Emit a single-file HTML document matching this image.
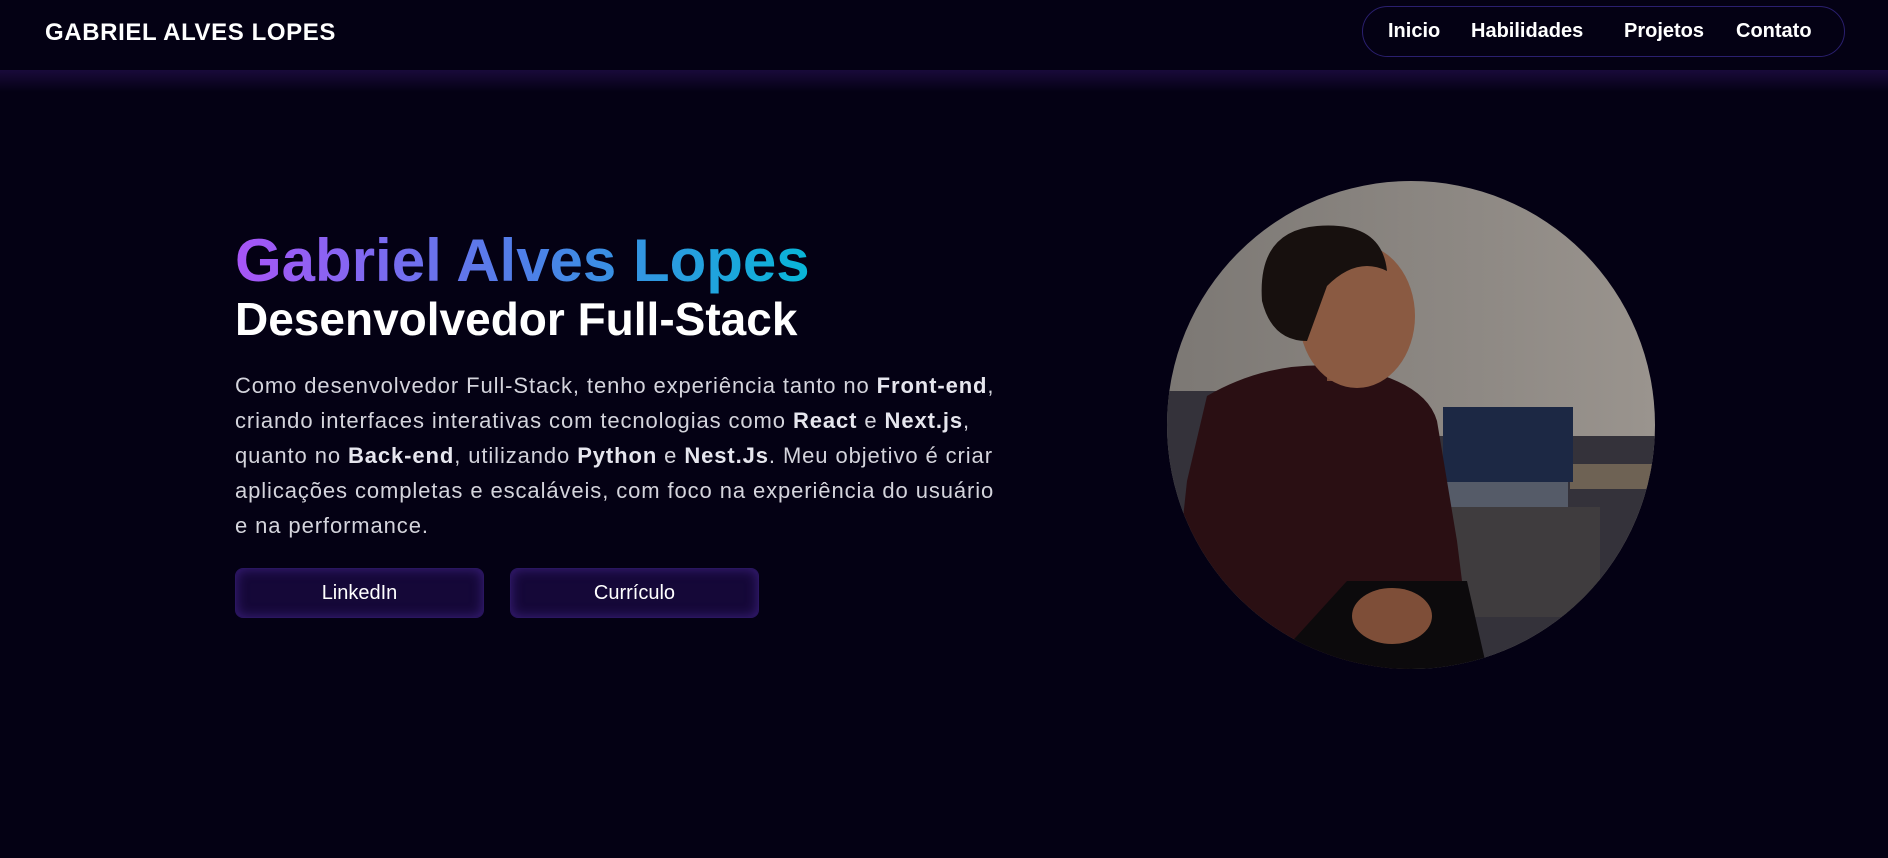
<!DOCTYPE html>
<html><head><meta charset="utf-8"><style>
*{margin:0;padding:0;box-sizing:border-box}
body{width:1888px;height:858px;background:#040114;font-family:"Liberation Sans",sans-serif;overflow:hidden;position:relative;color:#fff}
.hdr{position:absolute;left:0;top:0;width:1888px;height:70px;background:#040114}
.glow{position:absolute;left:0;top:70px;width:1888px;height:22px;background:linear-gradient(#190a3a,#040114)}
.logo{position:absolute;left:45px;top:19px;font-size:24px;font-weight:bold;letter-spacing:0.6px}
.nav{position:absolute;left:1362px;top:6px;width:483px;height:51px;border:1.5px solid #2a1f6e;border-radius:26px}
.nav span{position:absolute;top:13px;font-size:20px;font-weight:bold}
h1{position:absolute;left:235px;top:226px;font-size:60px;font-weight:bold;background:linear-gradient(90deg,#a855f7,#4f7fe8 50%,#08b6d8);-webkit-background-clip:text;background-clip:text;color:transparent;white-space:nowrap}
h2{position:absolute;left:235px;top:292px;font-size:46px;font-weight:bold;white-space:nowrap}
p{position:absolute;left:235px;top:368px;font-size:22px;letter-spacing:0.9px;line-height:35px;color:#d4d4dc;white-space:nowrap}
p b{color:#e6e6ee}
.btn{position:absolute;top:568px;width:249px;height:50px;border-radius:8px;background:#150838;box-shadow:inset 0 0 12px #3a1f7a;border:1px solid #2a1660;font-size:20px;text-align:center;line-height:48px}
.ph{position:absolute;left:1167px;top:181px;width:488px;height:488px;border-radius:50%;overflow:hidden}
</style></head><body>
<div class="hdr"></div><div class="glow"></div>
<div class="logo">GABRIEL ALVES LOPES</div>
<div class="nav"><span style="left:25px">Inicio</span><span style="left:108px">Habilidades</span><span style="left:261px">Projetos</span><span style="left:373px">Contato</span></div>
<h1>Gabriel Alves Lopes</h1>
<h2>Desenvolvedor Full-Stack</h2>
<p>Como desenvolvedor Full-Stack, tenho experiência tanto no <b>Front-end</b>,<br>criando interfaces interativas com tecnologias como <b>React</b> e <b>Next.js</b>,<br>quanto no <b>Back-end</b>, utilizando <b>Python</b> e <b>Nest.Js</b>. Meu objetivo é criar<br>aplicações completas e escaláveis, com foco na experiência do usuário<br>e na performance.</p>
<div class="btn" style="left:235px">LinkedIn</div>
<div class="btn" style="left:510px">Currículo</div>
<div class="ph"><svg width="488" height="488" viewBox="0 0 488 488">
<defs><linearGradient id="w" x1="0" x2="1"><stop offset="0" stop-color="#7c7874"/><stop offset="0.6" stop-color="#8d8883"/><stop offset="1" stop-color="#9a948e"/></linearGradient></defs>
<rect width="488" height="488" fill="url(#w)"/>
<rect x="0" y="210" width="140" height="278" fill="#34323a"/>
<rect x="260" y="255" width="228" height="233" fill="#34323a"/>
<rect x="283" y="326" width="150" height="110" fill="#3f3c3e"/>
<rect x="403" y="283" width="85" height="25" fill="#6e6254"/>
<rect x="276" y="226" width="130" height="75" fill="#1c2844"/>
<rect x="273" y="301" width="128" height="25" fill="#555b68"/>
<path d="M40 215 Q100 180 170 185 L200 190 Q260 205 270 240 L290 360 L300 440 L240 488 L0 488 L20 300 Z" fill="#2a0f13"/>
<rect x="160" y="170" width="45" height="30" fill="#7a4c38"/>
<ellipse cx="190" cy="135" rx="58" ry="72" fill="#8a5a42"/>
<path d="M95 120 Q90 50 150 45 Q215 40 220 90 Q190 75 160 105 L140 160 Q105 160 95 120Z" fill="#17100e"/>
<path d="M100 488 L180 400 L300 400 L320 488Z" fill="#0c0a0c"/>
<ellipse cx="225" cy="435" rx="40" ry="28" fill="#7e4e38"/>
</svg></div>
</body></html>
